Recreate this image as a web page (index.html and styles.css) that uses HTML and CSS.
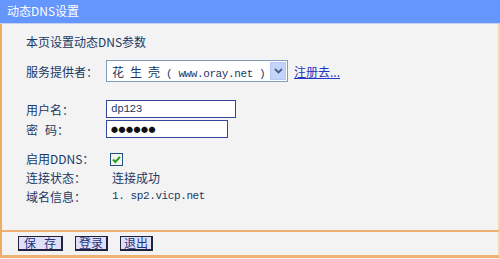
FILE: index.html
```html
<!DOCTYPE html>
<html lang="zh-CN">
<head>
    <meta charset="UTF-8">
    <title>动态DNS设置</title>
    <link rel="stylesheet" href="styles.css">
</head>
<body>
    <div class="panel">
        <div class="judul">动态DNS设置</div>
        <div class="isi">
            <div class="intro">本页设置动态DNS参数</div>

            <div class="baris baris-provider">
                <div class="label">服务提供者：</div>
                <div class="pilih">
                    <span class="pilih-teks"><span class="renggang">花生壳</span><span class="latin">( www.oray.net )</span></span>
                    <span class="pilih-panah">
                        <svg width="9" height="6" viewBox="0 0 9 6"><path d="M1 1 L4.5 4.5 L8 1" fill="none" stroke="#4a5f88" stroke-width="1.8"/></svg>
                    </span>
                </div>
                <a class="daftar" href="#">注册去...</a>
            </div>

            <div class="baris baris-user">
                <div class="label">用户名：</div>
                <div class="field field-user"><span class="latin">dp123</span></div>
            </div>
            <div class="baris baris-pass">
                <div class="label"><span class="jarak-label">密</span>码：</div>
                <div class="field field-pass"><span class="titik">●●●●●●</span></div>
            </div>

            <div class="baris baris-ddns">
                <div class="label">启用DDNS：</div>
                <span class="centang">
                    <svg width="13" height="13" viewBox="0 0 13 13">
                        <rect x="0.5" y="0.5" width="12" height="12" fill="#f4f4f0" stroke="#1c5180"/>
                        <path d="M3 6.5 L5.3 9 L10 3.8" fill="none" stroke="#21a121" stroke-width="2"/>
                    </svg>
                </span>
            </div>
            <div class="baris baris-status">
                <div class="label">连接状态：</div>
                <div class="nilai">连接成功</div>
            </div>
            <div class="baris baris-domain">
                <div class="label">域名信息：</div>
                <div class="nilai latin">1. sp2.vicp.net</div>
            </div>
        </div>
        <div class="aksi">
            <button class="tombol tombol-simpan"><span class="jarak-tombol">保</span>存</button>
            <button class="tombol">登录</button>
            <button class="tombol">退出</button>
        </div>
    </div>
</body>
</html>
```

FILE: styles.css
```css
body {
    margin: 0;
    padding: 0;
    background-color: #f3f3f3;
    font-family: "Noto Sans CJK SC", "Liberation Sans", sans-serif;
    font-size: 12px;
    color: #203864;
}
.panel {
    width: 500px;
    height: 259px;
    box-sizing: border-box;
    display: flex;
    flex-direction: column;
}
.judul {
    height: 23px;
    line-height: 22px;
    background-color: #6496fe;
    border-bottom: 1px solid #c8d2f0;
    color: white;
    padding-left: 7px;
    flex-shrink: 0;
}
.isi {
    flex: 1;
    border-left: 2px solid #f0aa66;
    border-right: 2px solid #f6d6ae;
    padding: 10px 0 0 24px;
}
.intro {
    height: 16px;
    line-height: 16px;
}
.latin {
    font-family: "Liberation Mono", monospace;
    font-size: 11px;
    letter-spacing: -0.4px;
}
.renggang {
    letter-spacing: 6px;
}
.jarak-label {
    margin-right: 7px;
}
.baris {
    display: flex;
    align-items: center;
}
.label {
    width: 80px;
    flex-shrink: 0;
}
.baris-provider {
    margin-top: 10px;
    height: 22px;
}
.pilih {
    width: 182px;
    height: 22px;
    box-sizing: border-box;
    border: 1px solid #7f9db9;
    background-color: white;
    display: flex;
    align-items: center;
    justify-content: space-between;
    padding: 1px 1px 1px 5px;
}
.pilih-panah {
    width: 16px;
    height: 18px;
    background-color: #c3d4fc;
    border: 1px solid #b7c9f3;
    box-sizing: border-box;
    display: flex;
    align-items: center;
    justify-content: center;
}
.daftar {
    margin-left: 6px;
    color: #2433c4;
    text-decoration: underline;
}
.field {
    height: 18px;
    box-sizing: border-box;
    border: 1px solid #33479a;
    background-color: white;
    display: flex;
    align-items: center;
    padding-left: 4px;
}
.field-user {
    width: 130px;
}
.field-pass {
    width: 122px;
}
.titik {
    font-size: 7px;
    letter-spacing: 0.5px;
    color: #111;
}
.baris-user {
    margin-top: 18px;
    height: 18px;
}
.baris-pass {
    margin-top: 2px;
    height: 18px;
}
.baris-ddns {
    margin-top: 13px;
    height: 14px;
}
.centang {
    margin-left: 4px;
    margin-top: 3px;
    display: flex;
}
.baris-status {
    margin-top: 3px;
    height: 18px;
}
.baris-domain {
    margin-top: 1px;
    height: 18px;
}
.nilai {
    margin-left: 6px;
}
.aksi {
    height: 28px;
    flex-shrink: 0;
    box-sizing: border-box;
    border-top: 2px solid #f0b070;
    border-bottom: 3px solid #f0b070;
    border-left: 2px solid #f0aa66;
    border-right: 2px solid #f6d6ae;
    padding: 4px 0 0 16px;
    display: flex;
    align-items: flex-start;
    gap: 12px;
    margin-bottom: 1px;
}
.tombol {
    height: 15px;
    padding: 0 3px;
    font-family: "Noto Sans CJK SC", sans-serif;
    font-size: 12px;
    line-height: 12px;
    color: #1e3282;
    background-color: #dfe0f7;
    border: 1px solid #22223c;
    border-right-width: 2px;
    border-bottom-width: 2px;
    white-space: nowrap;
    cursor: pointer;
}
.tombol-simpan {
    width: 45px;
}
.jarak-tombol {
    margin-right: 8px;
}
```
